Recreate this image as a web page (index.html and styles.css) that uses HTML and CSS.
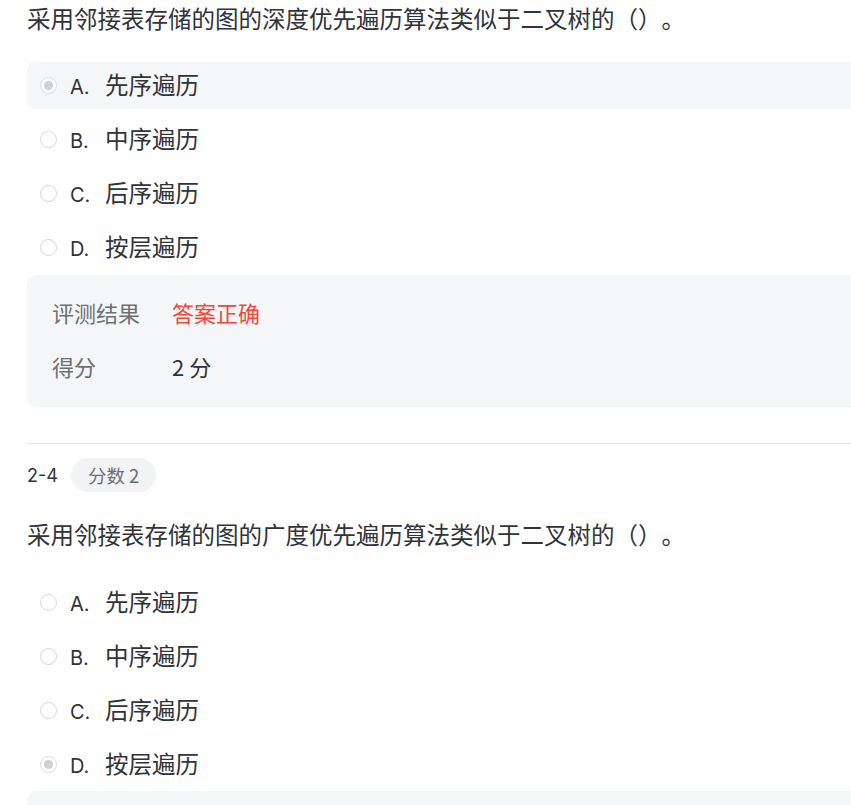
FILE: index.html
```html
<!DOCTYPE html>
<html lang="zh-CN">
<head>
<meta charset="utf-8">
<title>题目</title>
<link rel="stylesheet" href="styles.css">
</head>
<body>
<div class="page">
  <section class="question first">
    <p class="stem">采用邻接表存储的图的深度优先遍历算法类似于二叉树的<span class="punct">（）。</span></p>
    <ul class="options">
      <li class="option checked hover"><span class="radio"></span><span class="opt-label"><span class="letter">A.</span><span class="text">先序遍历</span></span></li>
      <li class="option"><span class="radio"></span><span class="opt-label"><span class="letter">B.</span><span class="text">中序遍历</span></span></li>
      <li class="option"><span class="radio"></span><span class="opt-label"><span class="letter">C.</span><span class="text">后序遍历</span></span></li>
      <li class="option"><span class="radio"></span><span class="opt-label"><span class="letter">D.</span><span class="text">按层遍历</span></span></li>
    </ul>
    <div class="result">
      <div class="result-row"><span class="label">评测结果</span><span class="value correct">答案正确</span></div>
      <div class="result-row"><span class="label">得分</span><span class="value">2 分</span></div>
    </div>
  </section>
  <hr class="divider">
  <section class="question">
    <div class="q-head"><span class="q-no">2-4</span><span class="badge">分数 2</span></div>
    <p class="stem">采用邻接表存储的图的广度优先遍历算法类似于二叉树的<span class="punct">（）。</span></p>
    <ul class="options">
      <li class="option"><span class="radio"></span><span class="opt-label"><span class="letter">A.</span><span class="text">先序遍历</span></span></li>
      <li class="option"><span class="radio"></span><span class="opt-label"><span class="letter">B.</span><span class="text">中序遍历</span></span></li>
      <li class="option"><span class="radio"></span><span class="opt-label"><span class="letter">C.</span><span class="text">后序遍历</span></span></li>
      <li class="option checked"><span class="radio"></span><span class="opt-label"><span class="letter">D.</span><span class="text">按层遍历</span></span></li>
    </ul>
    <div class="result"></div>
  </section>
</div>
</body>
</html>
```
FILE: styles.css
```css
html, body {
  margin: 0;
  padding: 0;
  background: #ffffff;
  overflow: hidden;
}
body {
  font-family: "Noto Sans CJK SC", "Noto Sans", sans-serif;
  color: #303338;
}
.page {
  width: 900px;
  padding: 3px 0 0 27px;
}
.stem {
  margin: 0;
  height: 32px;
  font-size: 23.5px;
  line-height: 30px;
  text-spacing-trim: space-all;
}
.punct {
  font-family: "Noto Sans CJK TC", "Noto Sans CJK SC", sans-serif;
}
.options {
  list-style: none;
  margin: 27px 0 0;
  padding: 0;
  display: flex;
  flex-direction: column;
  gap: 7px;
}
.question:not(.first) .options {
  margin-top: 28px;
}
.option {
  height: 47px;
  box-sizing: border-box;
  display: flex;
  align-items: center;
  padding-left: 13px;
}
.option.hover {
  background: #f5f6f8;
  border-radius: 8px 0 0 8px;
}
.radio {
  flex: none;
  width: 15px;
  height: 15px;
  border: 1px solid #d4d6d9;
  border-radius: 50%;
  background: #ffffff;
  display: flex;
  align-items: center;
  justify-content: center;
}
.option.checked .radio {
  border-color: #d9dbde;
}
.option.checked .radio::after {
  content: "";
  width: 9px;
  height: 9px;
  border-radius: 50%;
  background: #cfd1d4;
}
.opt-label {
  display: flex;
  align-items: baseline;
  margin-left: 13px;
  height: 47px;
  line-height: 44px;
}
.letter {
  font-family: "Inter", "Noto Sans", sans-serif;
  font-size: 20px;
  width: 35px;
}
.text {
  font-size: 23.5px;
}
.result {
  margin-top: 4px;
  background: #f5f6f8;
  border-radius: 10px 0 0 10px;
  padding: 23px 25px 25px;
  display: flex;
  flex-direction: column;
  gap: 24px;
}
.question:not(.first) .result {
  margin-top: 3px;
  height: 40px;
}
.result-row {
  display: flex;
  height: 30px;
  font-size: 22px;
  line-height: 28px;
}
.label {
  width: 120px;
  color: #6c6f74;
}
.value {
  color: #303338;
}
.value.correct {
  color: #f2463a;
}
.divider {
  margin: 36px 0 0;
  border: 0;
  height: 1px;
  background: #e8e9eb;
}
.q-head {
  margin-top: 14px;
  height: 34px;
  display: flex;
  align-items: center;
  gap: 13px;
  margin-bottom: 27px;
}
.q-no {
  font-family: "Inter", "Noto Sans", sans-serif;
  font-size: 18px;
  color: #303338;
}
.badge {
  height: 34px;
  padding: 0 17px;
  border-radius: 17px;
  background: #f2f3f5;
  color: #6c6f74;
  font-size: 18.5px;
  display: flex;
  align-items: center;
}
```
